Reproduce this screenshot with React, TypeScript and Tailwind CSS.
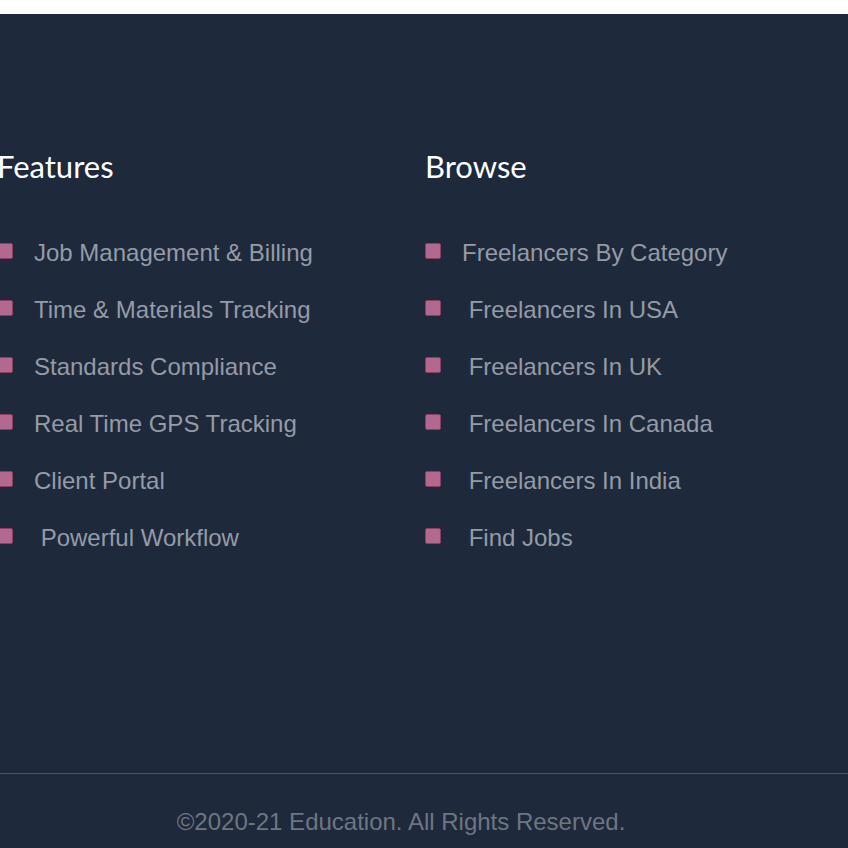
import React from "react";

const features = [
  "Job Management & Billing",
  "Time & Materials Tracking",
  "Standards Compliance",
  "Real Time GPS Tracking",
  "Client Portal",
  "\u00a0Powerful Workflow",
];

const browse = [
  "Freelancers By Category",
  "\u00a0Freelancers In USA",
  "\u00a0Freelancers In UK",
  "\u00a0Freelancers In Canada",
  "\u00a0Freelancers In India",
  "\u00a0Find Jobs",
];

const LinkColumn: React.FC<{ title: string; items: string[] }> = ({ title, items }) => {
  return (
    <div className="w-[428px] shrink-0">
      <h3 className="text-[31px] leading-[36px] text-white font-['Lato',sans-serif]">{title}</h3>
      <ul className="mt-[40px]">
        {items.map((item) => (
          <li key={item} className="h-[57px] flex items-center">
            <span className="w-[16px] h-[16px] rounded-[2px] bg-[#b3698f] border border-[#8e3e60] mr-[21px] -mt-[3px] shrink-0" />
            <a href="#" className="text-[24px] leading-[28px] text-[#959ba7] font-['Liberation_Sans',Arial,sans-serif] whitespace-pre">
              {item}
            </a>
          </li>
        ))}
      </ul>
    </div>
  );
};

const App: React.FC = () => {
  return (
    <div className="min-h-screen bg-white pt-[14px] overflow-hidden">
      <footer className="bg-[#1e293b] h-[834px] overflow-hidden">
        <div className="ml-[-3px] w-[856px] pt-[134px] pb-[207px] flex">
          <LinkColumn title="Features" items={features} />
          <LinkColumn title="Browse" items={browse} />
        </div>
        <div className="border-t border-[#4a5566]">
          <p className="ml-[-3px] w-[808px] text-center pt-[34px] text-[24px] leading-[28px] text-[#6f7681] font-['Liberation_Sans',Arial,sans-serif]">
            ©2020-21 Education. All Rights Reserved.
          </p>
        </div>
      </footer>
    </div>
  );
};

export default App;
